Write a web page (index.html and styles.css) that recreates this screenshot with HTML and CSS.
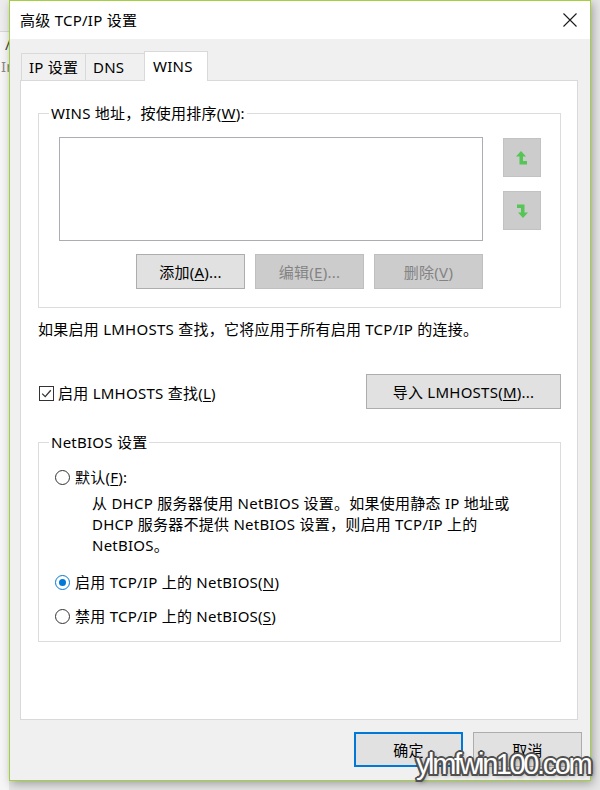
FILE: index.html
```html
<!DOCTYPE html>
<html lang="zh-CN">
<head>
<meta charset="utf-8">
<title>高级 TCP/IP 设置</title>
<link rel="stylesheet" href="styles.css">
</head>
<body>
<div class="desk">
  <div class="behind">
    <div class="behind-top"></div>
    <div class="behind-slash">/</div>
    <div class="behind-text">Ir</div>
  </div>
  <div class="dialog">
    <div class="titlebar">
      <span class="title">高级 TCP/IP 设置</span>
      <svg class="close" width="14" height="14" viewBox="0 0 14 14"><path d="M0.5 0.5 L13.5 13.5 M13.5 0.5 L0.5 13.5" stroke="#1a1a1a" stroke-width="1.1" fill="none"/></svg>
    </div>
    <div class="main">
      <div class="tabs">
        <div class="tab tab-ip">IP 设置</div>
        <div class="tab tab-dns">DNS</div>
        <div class="tab tab-wins active">WINS</div>
      </div>
      <div class="panel">
        <fieldset class="group group-wins">
          <legend>WINS 地址，按使用排序(<u>W</u>):</legend>
          <div class="wins-body">
            <div class="wins-row">
              <div class="listbox"></div>
              <div class="arrows">
                <div class="arrow-btn arrow-up">
                  <svg width="12" height="14" viewBox="0 0 12 14"><path d="M5 0 L10 5.5 H7 V10 H11 V13.5 H3.5 V5.5 H0 Z" fill="#55c655"/></svg>
                </div>
                <div class="arrow-btn arrow-down">
                  <svg width="12" height="14" viewBox="0 0 12 14"><path d="M5 0 L10 5.5 H7 V10 H11 V13.5 H3.5 V5.5 H0 Z" fill="#55c655" transform="rotate(180 6 7)"/></svg>
                </div>
              </div>
            </div>
            <div class="btn-row">
              <div class="btn">添加(<u>A</u>)...</div>
              <div class="btn disabled">编辑(<u>E</u>)...</div>
              <div class="btn disabled">删除(<u>V</u>)</div>
            </div>
          </div>
        </fieldset>
        <p class="note">如果启用 LMHOSTS 查找，它将应用于所有启用 TCP/IP 的连接。</p>
        <div class="lm-row">
          <label class="check-label">
            <span class="checkbox">
              <svg width="13" height="13" viewBox="0 0 13 13"><path d="M2.2 6.6 L5.2 9.6 L10.8 3.2" stroke="#333" stroke-width="1.3" fill="none"/></svg>
            </span>
            <span>启用 LMHOSTS 查找(<u>L</u>)</span>
          </label>
          <div class="btn btn-import">导入 LMHOSTS(<u>M</u>)...</div>
        </div>
        <fieldset class="group group-netbios">
          <legend>NetBIOS 设置</legend>
          <div class="netbios-body">
            <div class="radio-row"><span class="radio"></span><span>默认(<u>F</u>):</span></div>
            <div class="desc">
              <div>从 DHCP 服务器使用 NetBIOS 设置。如果使用静态 IP 地址或</div>
              <div>DHCP 服务器不提供 NetBIOS 设置，则启用 TCP/IP 上的</div>
              <div>NetBIOS。</div>
            </div>
            <div class="radio-row row-enable"><span class="radio checked"></span><span>启用 TCP/IP 上的 NetBIOS(<u>N</u>)</span></div>
            <div class="radio-row row-disable"><span class="radio"></span><span>禁用 TCP/IP 上的 NetBIOS(<u>S</u>)</span></div>
          </div>
        </fieldset>
      </div>
      <div class="footer">
        <div class="btn btn-foot default">确定</div>
        <div class="btn btn-foot">取消</div>
      </div>
    </div>
  </div>
  <div class="watermark">ylmfwin100.com</div>
</div>
</body>
</html>
```
FILE: styles.css
```css
* { box-sizing: border-box; margin: 0; padding: 0; }
body {
  margin: 0;
  background: #e6e6e6;
  font-family: "Noto Sans", "Noto Sans CJK SC", sans-serif;
  font-size: 15px;
  letter-spacing: 0.25px;
  color: #000;
}
u { text-decoration: underline; text-underline-offset: 2px; }

.desk {
  position: relative;
  width: 600px;
  height: 790px;
  display: flex;
  overflow: hidden;
}

.behind {
  width: 9px;
  height: 790px;
  flex: none;
  background: #f5f5f5;
  overflow: hidden;
  display: flex;
  flex-direction: column;
  font-size: 15px;
  color: #666;
}
.behind-top { height: 32px; background: #ececec; border-bottom: 1px solid #d6d6d6; }
.behind-slash { height: 24px; line-height: 24px; padding-left: 5px; color: #444; }
.behind-text { line-height: 20px; padding-left: 1px; white-space: nowrap; color: #888; }

.dialog {
  width: 582px;
  height: 781px;
  flex: none;
  border: 1px solid #a2d03e;
  background: #f0f0f0;
  display: flex;
  flex-direction: column;
  box-shadow: 2px 3px 9px rgba(0, 0, 0, 0.3);
}

.titlebar {
  height: 38px;
  flex: none;
  background: #fff;
  display: flex;
  align-items: center;
  justify-content: space-between;
  padding: 0 13px 0 10px;
}
.title { line-height: 20px; }

.main {
  flex: 1;
  padding: 12px 12px 0 10px;
  display: flex;
  flex-direction: column;
}

.tabs {
  height: 29px;
  display: flex;
  align-items: flex-end;
}
.tab {
  height: 27px;
  border: 1px solid #d9d9d9;
  border-bottom: none;
  background: #f0f0f0;
  line-height: 26px;
  padding-left: 7px;
  white-space: nowrap;
}
.tab-ip { width: 65px; margin-left: 1px; }
.tab-dns { width: 60px; margin-left: -1px; }
.tab-wins { width: 64px; margin-left: -1px; }
.tab.active {
  height: 30px;
  margin-bottom: -1px;
  background: #fff;
  position: relative;
  z-index: 1;
  line-height: 29px;
  padding-left: 8px;
}

.panel {
  width: 558px;
  height: 640px;
  flex: none;
  background: #fff;
  border: 1px solid #d9d9d9;
  padding-left: 17px;
}

.group {
  width: 523px;
  border: 1px solid #dcdcdc;
  padding: 0;
}
.group legend {
  line-height: 20px;
  margin-left: 10px;
  padding: 0 2px;
}
.group-wins { margin-top: 22px; }
.wins-body { padding: 14px 0 18px 20px; }
.wins-row { display: flex; }
.listbox {
  width: 424px;
  height: 104px;
  border: 1px solid #abadb3;
  background: #fff;
}
.arrows {
  margin-left: 20px;
  display: flex;
  flex-direction: column;
}
.arrow-btn {
  width: 38px;
  height: 39px;
  background: #cccccc;
  border: 1px solid #c2c2c2;
  display: flex;
  align-items: center;
  justify-content: center;
}
.arrow-up { margin-top: 1px; }
.arrow-down { margin-top: 14px; }

.btn-row {
  width: 424px;
  margin-top: 13px;
  display: flex;
  justify-content: flex-end;
  gap: 10px;
}
.btn {
  height: 35px;
  width: 109px;
  background: #e1e1e1;
  border: 1px solid #adadad;
  display: flex;
  align-items: center;
  justify-content: center;
  line-height: 20px;
  white-space: nowrap;
}
.btn.disabled {
  background: #cccccc;
  border-color: #bfbfbf;
  color: #838383;
}

.note {
  margin-top: 11px;
  line-height: 20px;
  white-space: nowrap;
}

.lm-row {
  width: 523px;
  margin-top: 35px;
  display: flex;
  align-items: center;
  justify-content: space-between;
}
.check-label {
  display: flex;
  align-items: center;
  gap: 4px;
  margin-left: 1px;
  margin-top: 3px;
  line-height: 20px;
}
.checkbox {
  width: 15px;
  height: 15px;
  border: 1px solid #333;
  display: flex;
  align-items: center;
  justify-content: center;
  background: #fff;
}
.btn-import { width: 195px; }

.group-netbios { margin-top: 23px; }
.netbios-body { padding: 15px 0 15px 16px; }
.radio-row {
  display: flex;
  align-items: center;
  gap: 5px;
  line-height: 20px;
  white-space: nowrap;
}
.radio {
  width: 15px;
  height: 15px;
  border: 1px solid #333;
  border-radius: 50%;
  background: #fff;
  display: flex;
  align-items: center;
  justify-content: center;
}
.radio.checked { border-color: #0078d7; }
.radio.checked::after {
  content: "";
  width: 7px;
  height: 7px;
  border-radius: 50%;
  background: #0078d7;
}
.desc {
  margin-top: 6px;
  padding-left: 37px;
  line-height: 21px;
  white-space: nowrap;
}
.row-enable { margin-top: 16px; }
.row-disable { margin-top: 14px; }

.footer {
  margin-top: 12px;
  margin-right: -4px;
  display: flex;
  justify-content: flex-end;
  gap: 10px;
}
.btn-foot { width: 109px; }
.btn-foot.default { border: 2px solid #0078d7; }

.watermark {
  position: absolute;
  left: 416px;
  top: 750px;
  font-family: "Liberation Sans", Arial, sans-serif;
  font-size: 29px;
  line-height: 29px;
  letter-spacing: -2.4px;
  color: #fff;
  white-space: nowrap;
  text-shadow:
    -2px 0 #505050, 2px 0 #505050, 0 -2px #505050, 0 2px #505050,
    -1.5px -1.5px #505050, 1.5px 1.5px #505050, -1.5px 1.5px #505050, 1.5px -1.5px #505050,
    2px 2px 4px rgba(0, 0, 0, 0.45);
}
```
